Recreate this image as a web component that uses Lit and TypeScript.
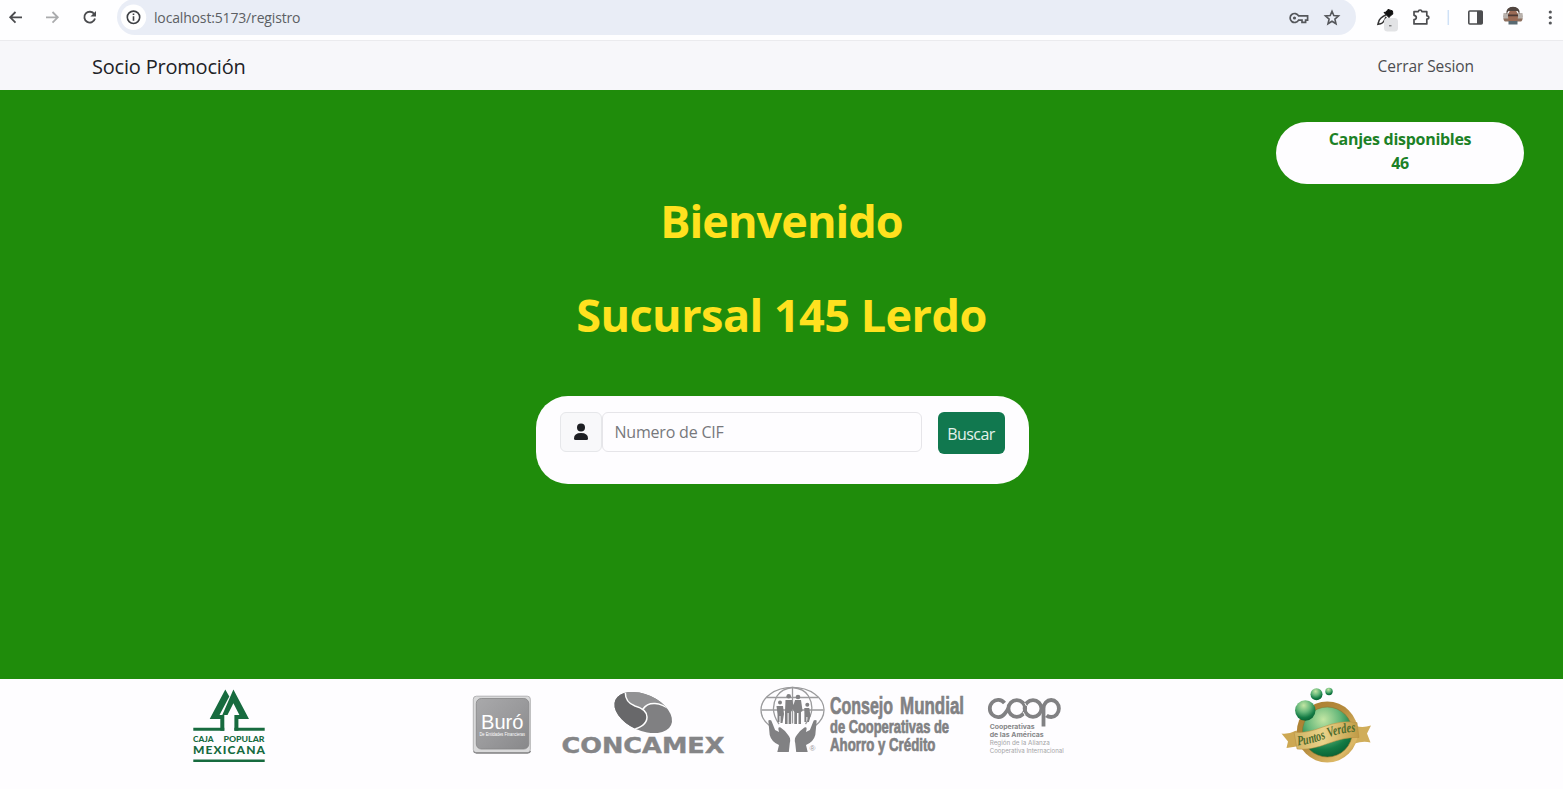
import { LitElement, html, css } from "lit";
import { customElement } from "lit/decorators.js";

@customElement("browser-bar")
class BrowserBar extends LitElement {
  static styles = css`
    :host { display: flex; height: 41px; box-sizing: border-box; background: #fefeff; border-bottom: 1px solid #ebebee; font-family: "Open Sans", "Noto Sans", sans-serif; }
    svg { display: block; flex: none; }
    .omni { display: flex; flex: none; width: 1239px; height: 36px; margin-top: -1px; border-radius: 18px; background: #e9edf6; justify-content: space-between; }
    .left { display: flex; }
    .url { font-size: 14px; line-height: 37px; color: #5c5f64; white-space: nowrap; margin-left: 3px; letter-spacing: -0.16px; }
  `;
  render() {
    return html`
      <svg width="117" height="36" viewBox="0 0 117 36" fill="none" stroke="#4a4b4e" stroke-width="1.8">
        <path d="M22 17.300H10.500M15.500 12l-5.300 5.300 5.300 5.300" />
        <path stroke="#aaabad" d="M46 17.300h11.500M52.500 12l5.300 5.300-5.300 5.300" />
        <path d="M94.300 14.200A5.400 5.400 0 1 0 95 18.500" />
        <path fill="#4a4b4e" stroke="none" d="M96 11v5.600h-5.600z" />
      </svg>
      <div class="omni">
        <div class="left">
          <svg width="34" height="36" viewBox="117 0 34 36">
            <circle cx="133.500" cy="18.300" r="12.700" fill="#fff" />
            <circle cx="133.500" cy="18.300" r="6.200" fill="none" stroke="#3e4044" stroke-width="1.600" />
            <path d="M133.500 17.300v4.400M133.500 14.500v1.600" stroke="#3e4044" stroke-width="1.600" />
          </svg>
          <span class="url">localhost:5173/registro</span>
        </div>
        <svg width="73" height="36" viewBox="1283 -1 73 36" fill="none" stroke="#55575b" stroke-width="1.700">
          <path d="M1298.600 15.900A4.500 4.500 0 1 0 1298.600 20.100H1302v2.200h3.600v-2.200h2v-4.200z" />
          <circle cx="1294.500" cy="18" r="1.600" fill="#55575b" stroke="none" />
          <path stroke-width="1.600" d="M1332 11.300l1.800 4.300 4.700.4-3.600 3.100 1.100 4.600-4-2.500-4 2.500 1.100-4.600-3.600-3.100 4.700-.4z" />
        </svg>
      </div>
      <svg width="207" height="36" viewBox="1356 0 207 36" fill="none">
        <path d="M1386.300 14.600q-7 3.500-7.700 7.300l-.6 2.300 2.600-.500q3-.500 5.500-7" stroke="#333" stroke-width="1.600" />
        <path d="M1384 12.500l2.200-.5 1.800-2.600 4.500 1.500.3 3.200-2.800 2-1 1.500z" fill="#111" stroke="#111" />
        <rect x="1384" y="18" width="14" height="13.500" rx="3.500" fill="#e2e3e5" />
        <path d="M1389 25.800h2.500" stroke="#555" />
        <path d="M1414 11.700h4.300q.2-1.700 1.800-1.700t1.800 1.700h4.900v4.100q2 .1 2 1.700t-2 1.700v4.700H1414v-4.200q2.300-.300 2.300-2.200t-2.300-2.200z" stroke="#4c4d50" stroke-width="1.700" stroke-linejoin="round" />
        <path d="M1448.300 10v15" stroke="#cfe1f7" stroke-width="1.500" />
        <rect x="1468.800" y="11" width="13.400" height="13" rx="1" stroke="#4c4d50" stroke-width="1.600" />
        <path d="M1477 11h5.200v13h-5.200z" fill="#4c4d50" />
        <clipPath id="face"><circle cx="1513" cy="16.500" r="10" /></clipPath>
        <g clip-path="url(#face)">
          <path d="M1503 13h20v6h-20z" fill="#b9b2ad" />
          <path d="M1503 18.500h20v3h-20z" fill="#8d705f" />
          <ellipse cx="1513" cy="16.500" rx="5" ry="7" fill="#9a6a55" />
          <path d="M1506.500 14q-1-7 6.500-7.500 7.500.5 6.500 7.500l-2-3h-9z" fill="#514640" />
          <path d="M1508 14.600h10v1.600h-10z" fill="#4a3833" />
          <path d="M1508.500 21h9v3.500h-9z" fill="#596a72" />
        </g>
        <g fill="#55575a"><circle cx="1550.300" cy="12" r="1.600" /><circle cx="1550.300" cy="17.500" r="1.600" /><circle cx="1550.300" cy="23" r="1.600" /></g>
      </svg>
    `;
  }
}

@customElement("partner-logos")
class PartnerLogos extends LitElement {
  static styles = css`
    :host { display: flex; height: 110px; background: #fefdff; padding-left: 185px; box-sizing: border-box; }
    svg { display: block; flex: none; height: 110px; }
    .buro { margin-left: 195px; }
    .concamex { margin-left: 20px; }
    .consejo { margin-left: 25px; }
    .coop { margin-left: 15px; }
    .puntos { margin-left: 205px; }
    .caja-type { font-family: Lato, sans-serif; font-weight: 900; }
    .sans { font-family: "Liberation Sans", sans-serif; }
    .wide { font-family: "DejaVu Sans", sans-serif; font-weight: bold; }
    .narrow { font-family: "Liberation Sans", sans-serif; font-weight: bold; }
    .inter { font-family: Inter, sans-serif; }
    .script { font-family: "Liberation Serif", serif; font-weight: bold; font-style: italic; }
  `;
  render() {
    return html`
      <svg width="90" viewBox="185 679 90 110" fill="#176b3f">
        <path d="M225.300 689.500l4 7-9.800 18.500h4.800v15.700h-4V719h-10.600z" />
        <path d="M233.400 689.500L249 719h-10.600v11.700h-4V715h5l-6-11.700-5.900 11.700h-5.200z" />
        <path d="M193.300 727.700h31v3h-31zM234.400 727.700h30.300v3h-30.300zM193.300 759.600h71.400v2.500h-71.400z" />
        <text class="caja-type" x="193" y="742" font-size="8" textLength="20.500" lengthAdjust="spacingAndGlyphs">CAJA</text>
        <text class="caja-type" x="223.500" y="742" font-size="8" textLength="41" lengthAdjust="spacingAndGlyphs">POPULAR</text>
        <text class="caja-type" x="193" y="753.900" font-size="12" textLength="72" lengthAdjust="spacing">MEXICANA</text>
      </svg>
      <svg class="buro" width="70" viewBox="470 679 70 110">
        <defs>
          <linearGradient id="bg" x1="0" y1="0" x2="1" y2="1"><stop offset="0" stop-color="#a9a9ab" /><stop offset=".5" stop-color="#9a9a9c" /><stop offset="1" stop-color="#88888a" /></linearGradient>
        </defs>
        <rect x="473.300" y="696.200" width="57" height="56.500" rx="3" fill="#d9d9da" stroke="#b3b3b5" />
        <path d="M473.500 751.500q1 1.500 3 1.500h51q2.500 0 3-2" fill="none" stroke="#858587" stroke-width="1.300" />
        <rect x="476.300" y="698.500" width="52.500" height="50.500" rx="5" fill="url(#bg)" stroke="#858587" stroke-width=".8" />
        <text class="sans" x="481" y="728.800" font-size="20" fill="#fff" textLength="42.500" lengthAdjust="spacingAndGlyphs">Buró</text>
        <text class="sans" x="479.500" y="736.200" font-size="5" fill="#fff" textLength="45.500" lengthAdjust="spacingAndGlyphs">De Entidades Financieras</text>
      </svg>
      <svg class="concamex" width="170" viewBox="560 679 170 110">
        <clipPath id="oval"><ellipse cx="643.200" cy="712.500" rx="30.500" ry="18" transform="rotate(24 643.200 712.500)" /></clipPath>
        <g clip-path="url(#oval)">
          <path d="M605 685h75v55h-75z" fill="#808082" />
          <path d="M625 685Q624 702 635 706T644 710L648 705Q660 699 674 712L690 685z" fill="#929294" />
          <path d="M605 685H625.500Q624 702 635 706C642 708 647 711 647 717S641 728 630 730L605 740z" fill="#68686a" />
          <path d="M625.500 690Q624 702 635 706C642 708 647 711 647 717S641 728 630 730M643 709Q647 703 655 703.500T674 712" fill="none" stroke="#fff" stroke-width="1.500" />
        </g>
        <text class="wide" x="561.500" y="753.300" font-size="20.500" fill="#858587" stroke="#858587" stroke-width=".4" textLength="163" lengthAdjust="spacingAndGlyphs">CONCAMEX</text>
      </svg>
      <svg class="consejo" width="215" viewBox="755 679 215 110" fill="#818183">
        <g fill="none" stroke="#9b9b9d" stroke-width="1.300">
          <path d="M770 725.900A31.500 22.700 0 1 1 815 725.900" />
          <path d="M779 724q-10-14-2-28 5-7.500 15.500-8.500Q804 688.500 808.500 696q8 14-3 28M792.500 687.500v36M761.500 710h62M766.500 697.500h52" />
        </g>
        <g>
          <circle cx="788.700" cy="696.300" r="2.300" /><circle cx="798" cy="697" r="2.300" /><circle cx="780" cy="702.500" r="2" /><circle cx="807.300" cy="704.800" r="2" />
          <path d="M785.500 700h6.500l1.500 5 1.500-5h6l1.600 11-1.600 1v12h-2.500v-11h-1.500v11h-2.700v-12l-1.600-3-1.600 3v12h-2.500v-11h-1v11h-2.600v-12z" />
          <path d="M776.500 706h6.500l1 8-1.500 9h-2v-7h-1v6h-2v-8zM804.300 708h5l1.200 8-1.600 6h-1.500v-5h-1v5h-2v-8z" />
          <path d="M768.300 720.500q3-1.500 3.800 2l3 7.500 4 2q-2-6 1.500-4.500 4 2.500 7.500 7.500 3 3 1.700 8l-1 9h-11.500l1.700-7q-7.500-3-9.300-10z" />
          <path d="M816.700 720.500q-3-1.500-3.800 2l-3 7.500-4 2q2-6-1.500-4.500-4 2.500-7.500 7.500-3 3-1.700 8l1 9h11.500l-1.700-7q7.500-3 9.300-10z" />
        </g>
        <text class="sans" x="809.500" y="751" font-size="8" fill="#99999b">®</text>
        <g class="narrow" stroke="#818183" stroke-width=".7">
          <text transform="translate(830 713.500) scale(.68 1)" font-size="24" textLength="92.600" lengthAdjust="spacingAndGlyphs">Consejo</text>
          <text transform="translate(900 713.500) scale(.72 1)" font-size="24" textLength="89" lengthAdjust="spacingAndGlyphs">Mundial</text>
          <text transform="translate(830 732.500) scale(.74 1)" font-size="17.500" textLength="160.800" lengthAdjust="spacingAndGlyphs">de Cooperativas de</text>
          <text transform="translate(830 751) scale(.73 1)" font-size="18" textLength="144.500" lengthAdjust="spacingAndGlyphs">Ahorro y Crédito</text>
        </g>
      </svg>
      <svg class="coop" width="85" viewBox="985 679 85 110" fill="#858587">
        <g fill="none" stroke="#818183" stroke-width="3.800">
          <path d="M1004.500 703A8.300 8.600 0 1 0 1004.500 714Q1007 711 1008.500 708" />
          <circle cx="1016.800" cy="708.500" r="8.400" />
          <circle cx="1033" cy="708.500" r="8.400" />
          <path d="M1043.500 726.500V708.500a7.700 8.500 0 1 1 7.700 8.500q-3 0-4.700-1.500" />
        </g>
        <path d="M1024.800 703l1.700 3M1023 712l2 3" stroke="#fff" />
        <g class="inter" font-size="6">
          <text x="989.700" y="729" font-weight="700" textLength="45" lengthAdjust="spacingAndGlyphs">Cooperativas</text>
          <text x="989.700" y="737" font-weight="700" textLength="54" lengthAdjust="spacingAndGlyphs">de las Américas</text>
          <text x="989.700" y="745" fill="#a4a4a6" textLength="60" lengthAdjust="spacingAndGlyphs">Región de la Alianza</text>
          <text x="989.700" y="753" fill="#a4a4a6" textLength="74" lengthAdjust="spacingAndGlyphs">Cooperativa Internacional</text>
        </g>
      </svg>
      <svg class="puntos" width="105" viewBox="1275 679 105 110">
        <defs>
          <radialGradient id="ball" cx=".42" cy=".25" r=".75"><stop offset="0" stop-color="#c3e6a4" /><stop offset=".45" stop-color="#65b77a" /><stop offset=".8" stop-color="#147b45" /><stop offset="1" stop-color="#0b6435" /></radialGradient>
          <linearGradient id="gold" x1="0" y1="0" x2="1" y2="1"><stop offset="0" stop-color="#a87b2d" /><stop offset=".45" stop-color="#b58b3d" /><stop offset=".8" stop-color="#ddb967" /><stop offset="1" stop-color="#a87b2d" /></linearGradient>
          <linearGradient id="ribbon"><stop offset="0" stop-color="#d1b263" /><stop offset=".45" stop-color="#ead389" /><stop offset="1" stop-color="#bf9a45" /></linearGradient>
        </defs>
        <path d="M1281.500 733.500q7 1 15-3l5 15q-6 1-15 2.500l1.500-6.500z" fill="#cda853" />
        <path d="M1356 726q7 2 15-.5l-4 8 3.500 9q-7-2-16 1z" fill="#d0ad5a" />
        <circle cx="1327.300" cy="732" r="30.500" fill="url(#gold)" />
        <circle cx="1327.300" cy="732" r="25" fill="url(#ball)" stroke="#8c742c" stroke-width=".6" />
        <circle cx="1305.300" cy="710.500" r="10.200" fill="url(#ball)" />
        <circle cx="1316.500" cy="694.300" r="6" fill="url(#ball)" />
        <circle cx="1329" cy="691.500" r="3.700" fill="url(#ball)" />
        <path d="M1294 732q11 2 29-5t34-4.500l2 15q-13-1-31 6t-31 5.500z" fill="url(#ribbon)" stroke="#b48d3e" stroke-width=".5" />
        <path id="rib" d="M1298 745.500q12-1 29-7.500t31-6" fill="none" />
        <text class="script" font-size="14" fill="#4c6b2c"><textPath href="#rib" textLength="59" lengthAdjust="spacingAndGlyphs">Puntos Verdes</textPath></text>
      </svg>
    `;
  }
}

@customElement("app-root")
class AppRoot extends LitElement {
  static styles = css`
    :host { display: flex; flex-direction: column; height: 789px; overflow: hidden; font-family: "Open Sans", "Noto Sans", sans-serif; background: #fefdff; }
    .nav { flex: none; height: 49px; box-sizing: border-box; padding: 0 89px 0 92px; background: #f7f7fa; display: flex; align-items: center; justify-content: space-between; }
    .brand { font-size: 20px; line-height: 30px; color: #212226; letter-spacing: -0.2px; padding-top: 2px; }
    .logout { font-size: 15.500px; line-height: 24px; color: #4c4d50; letter-spacing: -0.08px; padding-top: 1px; }
    .hero { flex: none; height: 589px; box-sizing: border-box; background: #1f8c0b; display: flex; flex-direction: column; align-items: center; padding-top: 32px; }
    .pill { align-self: flex-end; margin-right: 39px; width: 248px; height: 62px; box-sizing: border-box; padding-top: 5px; border-radius: 31px; background: #fefdff; color: #1c8126; font-size: 16px; line-height: 24px; font-weight: 700; letter-spacing: -0.28px; text-align: center; }
    h1 { margin: 0; color: #ffe11f; font-size: 45px; font-weight: 700; line-height: 54px; white-space: nowrap; }
    .welcome { margin-top: 10px; letter-spacing: -0.95px; }
    .branch { margin-top: 40px; letter-spacing: -0.53px; }
    .card { width: 493px; height: 88px; margin: 54px 0 0 1px; box-sizing: border-box; padding: 16px 24px; border-radius: 32px; background: #fefdff; display: flex; align-items: flex-start; }
    .addon { width: 42px; height: 40px; flex: none; box-sizing: border-box; border: 1px solid #e6e7ea; border-radius: 6px; background: #f8f8fa; display: grid; place-items: center; }
    .field { width: 320px; height: 40px; flex: none; box-sizing: border-box; border: 1px solid #e6e5e9; border-radius: 6px; background: #fefdff; padding: 0 12px; font: 16px "Open Sans", "Noto Sans", sans-serif; letter-spacing: -0.2px; color: #333; }
    .field::placeholder { color: #77787c; opacity: 1; }
    .search { width: 67px; height: 42px; flex: none; margin-left: 16px; padding: 2px 0 0; border: 0; border-radius: 6px; background: #11784f; color: #e4f1eb; font: 16px "Open Sans", "Noto Sans", sans-serif; letter-spacing: -0.6px; }
  `;
  render() {
    return html`
      <browser-bar></browser-bar>
      <nav class="nav"><span class="brand">Socio Promoción</span><span class="logout">Cerrar Sesion</span></nav>
      <main class="hero">
        <div class="pill">Canjes disponibles<br />46</div>
        <h1 class="welcome">Bienvenido</h1>
        <h1 class="branch">Sucursal 145 Lerdo</h1>
        <div class="card">
          <span class="addon">
            <svg width="16" height="18" viewBox="0 0 16 18" fill="#1d1f23"><circle cx="8" cy="4.500" r="4" /><path d="M1 15.500q0-5.500 7-5.500t7 5.500q0 1.500-1.500 1.500h-11Q1 17 1 15.500z" /></svg>
          </span>
          <input class="field" placeholder="Numero de CIF" />
          <button class="search">Buscar</button>
        </div>
      </main>
      <partner-logos></partner-logos>
    `;
  }
}
